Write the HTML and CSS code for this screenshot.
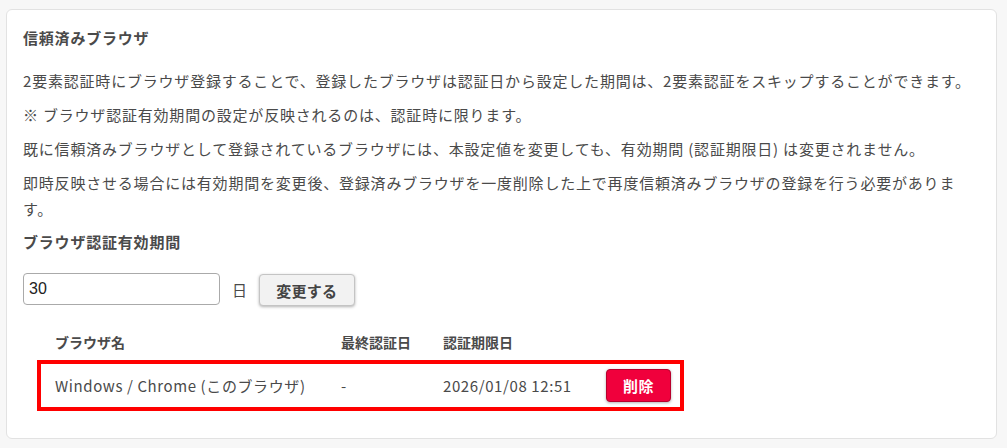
FILE: index.html
```html
<!DOCTYPE html>
<html lang="ja">

<head>
  <meta charset="UTF-8">
  <meta name="viewport" content="width=device-width, initial-scale=1.0">
  <title>信頼済みブラウザ</title>
  <link rel="stylesheet" href="styles.css">
</head>

<body>
  <section class="card">
    <h2 class="card-title">信頼済みブラウザ</h2>
    <p>2要素認証時にブラウザ登録することで、登録したブラウザは認証日から設定した期間は、2要素認証をスキップすることができます。</p>
    <p>※ ブラウザ認証有効期間の設定が反映されるのは、認証時に限ります。</p>
    <p>既に信頼済みブラウザとして登録されているブラウザには、本設定値を変更しても、有効期間 (認証期限日) は変更されません。</p>
    <p>即時反映させる場合には有効期間を変更後、登録済みブラウザを一度削除した上で再度信頼済みブラウザの登録を行う必要があります。</p>

    <h3 class="sub-title">ブラウザ認証有効期間</h3>
    <form class="period-form">
      <input class="period-input" type="text" value="30">
      <span class="period-unit">日</span>
      <button class="btn" type="button">変更する</button>
    </form>

    <div class="browsers">
      <div class="browsers-head">
        <span>ブラウザ名</span>
        <span>最終認証日</span>
        <span>認証期限日</span>
        <span></span>
      </div>
      <div class="browsers-row current">
        <span>Windows / Chrome (このブラウザ)</span>
        <span>-</span>
        <span>2026/01/08 12:51</span>
        <span><button class="btn-delete" type="button">削除</button></span>
      </div>
    </div>
  </section>
</body>

</html>
```

FILE: styles.css
```css
html {
  box-sizing: border-box;
  font-family: "Noto Sans CJK JP", "Noto Sans", sans-serif;
  font-size: 15px;
  color: #4a4a4a;
  background-color: #f7f7f7;
}

*,
*:before,
*::after {
  box-sizing: inherit;
}

body {
  margin: 0;
  padding: 9px 10px 11px 6px;
}

.card {
  background-color: #fff;
  border: 1px solid #e2e2e2;
  border-radius: 6px;
  padding: 16px 16px 27px;
  letter-spacing: 0.8px;
}

.card-title {
  font-size: 15px;
  font-weight: bold;
  line-height: 24px;
  margin: 0 0 18px;
}

.card p {
  margin: 0 0 8px;
  line-height: 26px;
}

.sub-title {
  font-size: 15px;
  font-weight: bold;
  line-height: 24px;
  margin: 8px 0 18px;
}

.period-form {
  display: flex;
  align-items: center;
}

.period-input {
  width: 197px;
  height: 32px;
  padding: 0 5px;
  border: 1px solid #aaa;
  border-radius: 4px;
  font-family: "Liberation Sans", sans-serif;
  font-size: 16px;
  letter-spacing: 0;
  color: #222;
}

.period-unit {
  margin: 0 11px 0 12px;
}

.btn {
  width: 96px;
  height: 32px;
  margin-top: 2px;
  background-color: #f2f2f2;
  border: 1px solid #c4c4c4;
  border-radius: 4px;
  box-shadow: 0 1px 3px rgba(0, 0, 0, 0.3);
  font-family: inherit;
  font-size: 15px;
  font-weight: bold;
  letter-spacing: 0.3px;
  color: #444;
}

.browsers {
  margin: 18px 0 0 14px;
  width: 647px;
}

.browsers-head,
.browsers-row {
  display: grid;
  grid-template-columns: 286px 102px 163px 65px;
  align-items: center;
  border: 4px solid transparent;
  padding: 0 9px 0 14px;
}

.browsers-head {
  height: 36px;
  font-size: 14px;
  font-weight: bold;
  letter-spacing: 0;
}

.browsers-row {
  height: 51px;
  letter-spacing: 0.6px;
}

.browsers-row.current {
  border-color: #f00;
}

.btn-delete {
  display: block;
  width: 65px;
  height: 33px;
  background-color: #f0003c;
  border: 1px solid #b8002c;
  border-radius: 4px;
  box-shadow: 0 1px 3px rgba(0, 0, 0, 0.3);
  font-family: inherit;
  font-size: 15px;
  font-weight: bold;
  letter-spacing: 0.5px;
  color: #fff;
}
```
